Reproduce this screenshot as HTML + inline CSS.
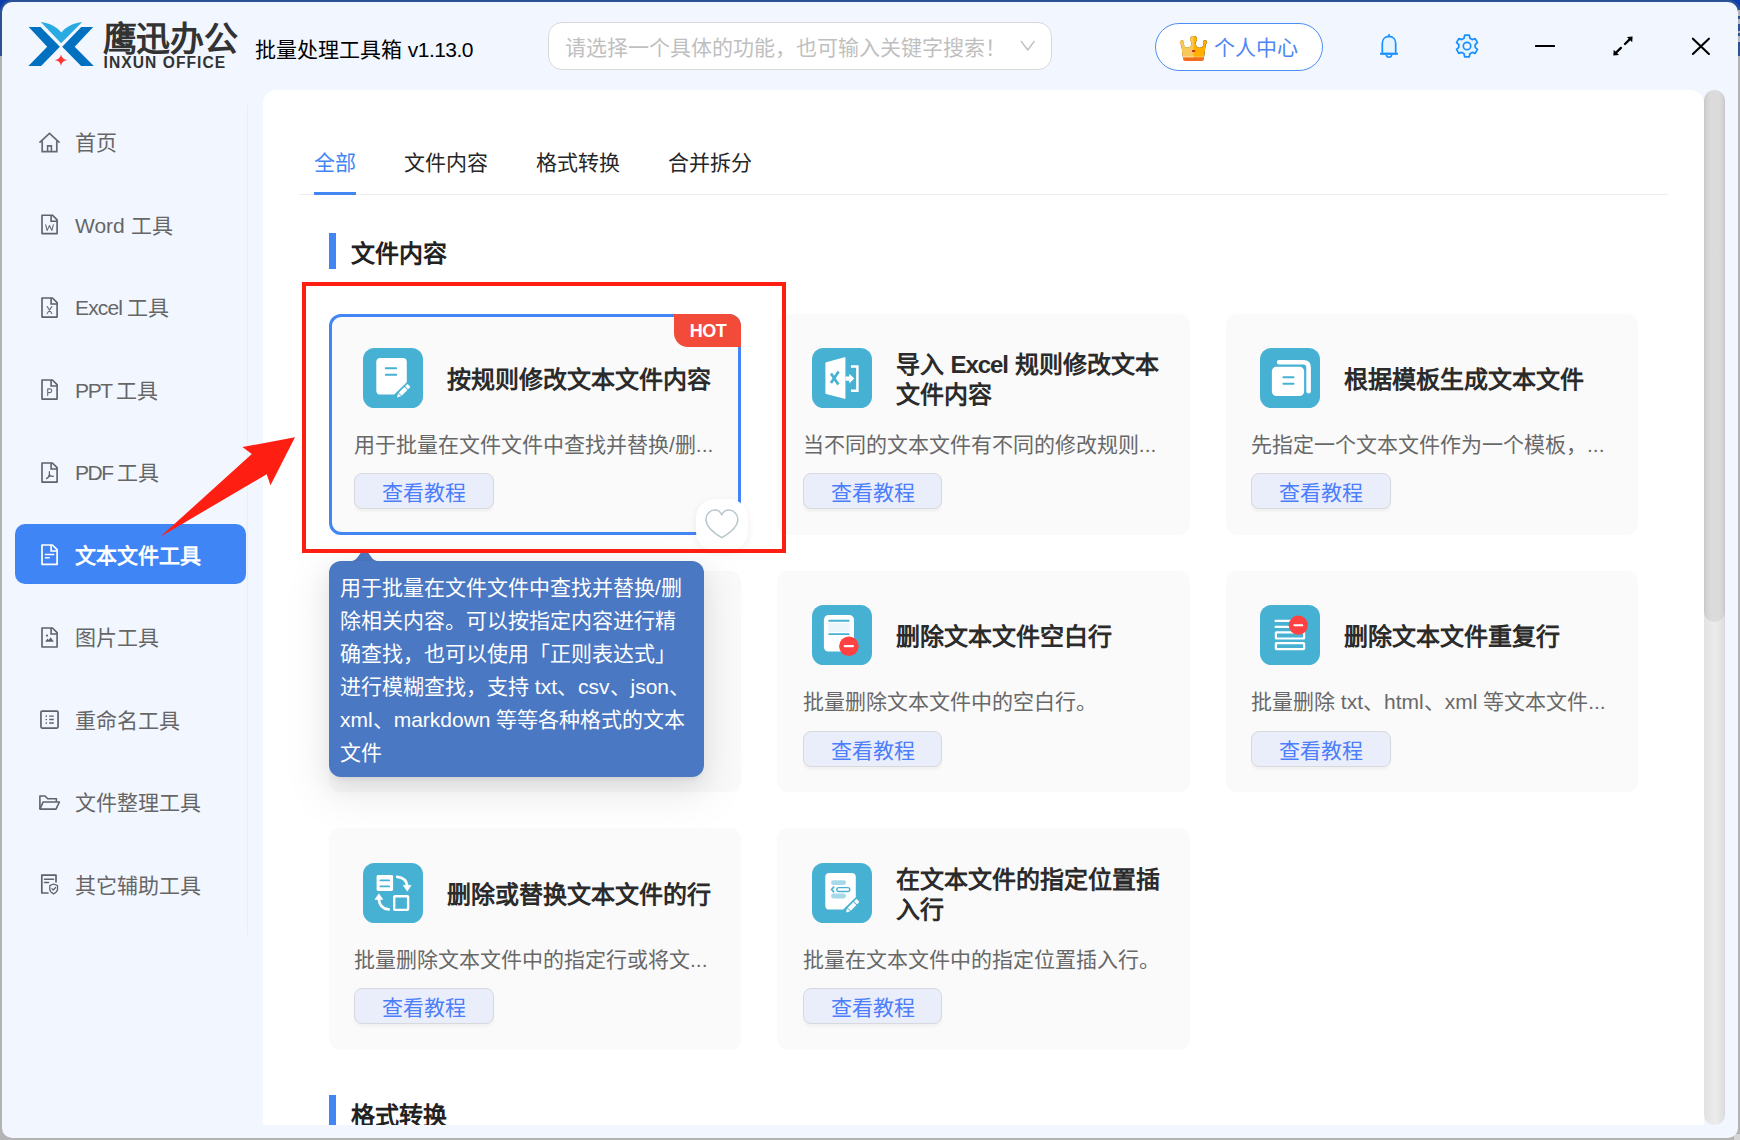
<!DOCTYPE html>
<html lang="zh-CN">
<head>
<meta charset="utf-8">
<title>批量处理工具箱</title>
<style>
*{box-sizing:border-box;margin:0;padding:0}
html,body{width:1740px;height:1140px;overflow:hidden}
body{position:relative;background:#b3b3b3;font-family:"Liberation Sans",sans-serif;color:#333}
.a{position:absolute}
.t{position:absolute;white-space:nowrap}
/* desktop behind window */
#desk-top{left:0;top:0;width:1740px;height:56px;background:#2b5293}
#desk-tl{left:0;top:0;width:11px;height:11px;background:#0a3db0;overflow:hidden}
#desk-tl i{position:absolute;left:2px;top:2px;width:40px;height:40px;border-radius:10px;box-shadow:0 0 0 2.2px #2b5293}
#desk-tr{left:1729px;top:0;width:11px;height:11px;background:#0a3db0;overflow:hidden}
#desk-tr i{position:absolute;right:2px;top:2px;width:40px;height:40px;border-radius:10px;box-shadow:0 0 0 2.2px #2b5293}
#desk-br{left:1734px;top:1134px;width:6px;height:6px;background:#d6d6d6}
#win{left:2px;top:2px;width:1736px;height:1136px;border-radius:10px;background:#f2f6ff;overflow:hidden}
/* top bar */
#brand-cn{left:102.5px;top:18px;font-size:34px;line-height:42px;font-weight:bold;color:#333;letter-spacing:-0.3px}
#brand-en{left:103.6px;top:54px;font-size:15.6px;line-height:18px;font-weight:bold;color:#333;letter-spacing:1.05px}
#apptitle{left:255px;top:35px;font-size:21px;line-height:30px;color:#000}
#search{left:548px;top:22px;width:504px;height:48px;border:1px solid #d9d9d9;border-radius:14px;background:#fff}
#search-ph{left:565px;top:33px;font-size:21px;line-height:30px;color:#bfbfbf}
#pc{left:1155px;top:23px;width:168px;height:48px;border:1px solid #4d8ef5;border-radius:24px;background:#fff}
#pc-t{left:1213.5px;top:33px;font-size:21px;line-height:30px;color:#4d86f2}
/* sidebar */
#sdiv{left:247px;top:105px;width:1px;height:830px;background:#ebedf0}
.si{position:absolute;left:75px;font-size:21px;line-height:30px;color:#666;white-space:nowrap}
#sact{left:15px;top:524px;width:231px;height:60px;border-radius:10px;background:#4085f5}
.si.on{color:#fff;font-weight:bold}
.sic{position:absolute;left:37px;width:26px;height:26px;overflow:visible}
/* panel */
#panel{left:263px;top:90px;width:1441px;height:1035px;background:#fff;border-radius:14px 14px 0 0;overflow:hidden}
#track{left:1704px;top:90px;width:21px;height:1035px;border-radius:10.5px;background:linear-gradient(90deg,#e2e2e2 0%,#ececec 55%,#e0e0e0 90%,#d8d8d8 100%)}
#thumb{left:1704px;top:90px;width:21px;height:532px;border-radius:10.5px;background:linear-gradient(90deg,#c7c7c7 0%,#d3d3d3 12%,#dbdbdb 32%,#dcdcdc 70%,#d3d3d3 90%,#c4c4c4 100%)}
</style>
<style>
.tab{position:absolute;top:147.5px;font-size:21px;line-height:30px;color:#262626;white-space:nowrap}
.sech{position:absolute;left:351px;font-size:24px;line-height:32px;font-weight:bold;color:#222;white-space:nowrap}
.secb{position:absolute;left:329px;width:7px;height:36px;background:#4285f4}
.card{position:absolute;width:412px;height:221px;border-radius:11px;background:#fafafa}
.card .ic{position:absolute;left:34px;top:34px;width:60px;height:60px}
.card .ttl{position:absolute;left:118px;top:51px;font-size:24px;line-height:30px;font-weight:bold;color:#2b2b2b;white-space:nowrap}
.card .ttl.two{top:36px}
.card .desc{position:absolute;left:25px;top:116px;font-size:21px;line-height:30px;color:#686868;white-space:nowrap}
.card .btn{position:absolute;left:25px;top:159px;width:139.5px;height:36px;border:1px solid #d8d9de;border-radius:8px;background:#eaeefb;color:#4c7dfb;font-size:21px;line-height:38px;text-align:center;white-space:nowrap;box-shadow:0 2.5px 2px rgba(0,0,0,.035)}
#c1{border:3px solid #4285f4;border-radius:12px}
.card.c2>*{margin-left:.8px}
.card.r3>*{margin-top:.7px}
.card.r2>*{margin-top:.35px}
.card.r2>.btn{margin-top:1.3px}
#c1 .ic{left:31px;top:31px}
#c1 .ttl{left:115px;top:48px}
#c1 .desc{left:22px;top:113px}
#c1 .btn{left:22px;top:156px}
#hot{position:absolute;left:674px;top:314px;width:67px;height:33px;background:#f24b39;border-radius:0 12px 0 14px;color:#fff;font-weight:bold;font-size:18px;line-height:35px;text-align:center;letter-spacing:-.55px;padding-left:1px}
#heart{position:absolute;left:696px;top:499px;width:52px;height:52px;border-radius:19px;background:#fff;box-shadow:0 2px 9px rgba(0,0,0,.07)}
#tip{position:absolute;left:329px;top:561px;width:375px;height:216px;border-radius:12px;background:#4b78c3;box-shadow:0 4.5px 9px -6px rgba(0,0,0,.12),0 9px 24px 0 rgba(0,0,0,.08),0 13.5px 42px 12px rgba(0,0,0,.05);color:#fff;font-size:21px;line-height:33px;padding:10px 0 0 11px;white-space:nowrap}
#redbox{position:absolute;left:302px;top:282px;width:484px;height:271px;border:4px solid #ff1f12}
</style>
</head>
<body>
<div class="a" id="desk-top"></div>
<div class="a" id="desk-tl"><i></i></div>
<div class="a" id="desk-tr"><i></i></div>
<div class="a" id="desk-br"></div>
<div class="a" style="left:1738px;top:10px;width:2px;height:6px;background:#b6b6bf"></div>
<div class="a" style="left:1738px;top:19px;width:2px;height:5px;background:#b6b6bf"></div>
<div class="a" style="left:1738px;top:31px;width:2px;height:2px;background:#b6b6bf"></div>
<div class="a" style="left:1738px;top:36px;width:2px;height:6px;background:#b6b6bf"></div>
<div class="a" id="win"></div>

<!-- ============ TOP BAR ============ -->
<svg class="a" style="left:20px;top:12px" width="90" height="66" viewBox="20 12 90 66">
  <polygon points="28.7,27 40.5,27 59.9,46.7 41.1,66.1 28.4,66.1 47.2,46.7" fill="#0070c0"/>
  <polygon points="93.2,27 81.3,27 62.2,46.7 81.1,66.1 93.8,66.1 74.7,46.7" fill="#0070c0"/>
  <path d="M40.8,22.1 C49,23 56,26.5 61.4,32.5 C66.5,26.5 74,23 82.2,22.1 L61.1,43.3 Z" fill="#29abe2"/>
  <path d="M61,54.5 C61.6,57.6 63.6,59.5 67.3,60.1 C63.6,60.7 61.6,62.6 61,65.7 C60.4,62.6 58.4,60.7 54.7,60.1 C58.4,59.5 60.4,57.6 61,54.5 Z" fill="#ff3535"/>
</svg>
<div class="t" id="brand-cn">鹰迅办公</div>
<div class="t" id="brand-en">INXUN OFFICE</div>
<div class="t" id="apptitle">批量处理工具箱 <span style="letter-spacing:-.55px">v1.13.0</span></div>

<div class="a" id="search"></div>
<div class="t" id="search-ph">请选择一个具体的功能，也可输入关键字搜索！</div>
<svg class="a" style="left:1018px;top:38px" width="20" height="16" viewBox="0 0 20 16"><path d="M3.2,3.4 L9.7,12 L16.2,3.4" fill="none" stroke="#bdbdbd" stroke-width="1.4" stroke-linecap="round" stroke-linejoin="round"/></svg>

<div class="a" id="pc"></div>
<!-- crown -->
<svg class="a" style="left:1178px;top:34px" width="32" height="30" viewBox="1178 34 32 30">
  <g id="crown">
    <path d="M1181.2,43.8 L1183,57.4 H1204 L1205.8,43.8 L1203.3,44.2 C1203.1,46.5 1201.6,47.8 1199.5,47.8 C1197.3,47.8 1195.9,46.1 1195.7,43.3 L1195.3,40.8 H1191.9 L1191.5,43.3 C1191.3,46.1 1189.9,47.8 1187.7,47.8 C1185.6,47.8 1184.1,46.5 1183.9,44.2 Z"/>
    <circle cx="1182" cy="42.6" r="2.05"/><circle cx="1193.6" cy="39.3" r="3.35"/><circle cx="1205" cy="42.4" r="2.05"/>
  </g>
  <use href="#crown" fill="#ffb000"/>
  <svg x="1178" y="34" width="15.6" height="30" viewBox="1178 34 15.6 30"><use href="#crown" fill="#f7c85c"/></svg>
  <rect x="1183" y="56.2" width="21" height="1.4" fill="#ffbf3f"/>
  <rect x="1183" y="56.2" width="10.6" height="1.4" fill="#fbdc98"/>
  <path d="M1183,57.4 H1204 V58.4 Q1204,60.9 1201.4,60.9 H1185.6 Q1183,60.9 1183,58.4 Z" fill="#f36d1e"/>
  <rect x="1192" y="50" width="3.2" height="2.1" rx=".5" fill="#d82a1c"/>
</svg>
<div class="t" id="pc-t">个人中心</div>

<!-- bell -->
<svg class="a" style="left:1376px;top:31px" width="26" height="30" viewBox="1376 31 26 30">
  <path d="M1382.3,53.7 V43.6 C1382.3,39.1 1385.3,36.4 1389,36.4 C1392.7,36.4 1395.7,39.1 1395.7,43.6 V53.7 Z" fill="#e6f4ff" stroke="#1890ff" stroke-width="1.7" stroke-linejoin="round"/>
  <path d="M1380,53.8 H1398" stroke="#1890ff" stroke-width="1.9"/>
  <path d="M1389,34.8 V36.4" stroke="#1890ff" stroke-width="1.8" stroke-linecap="round"/>
  <path d="M1386.3,54.6 C1386.5,56.3 1387.6,57.2 1389,57.2 C1390.4,57.2 1391.5,56.3 1391.7,54.6" fill="none" stroke="#1890ff" stroke-width="1.6"/>
</svg>
<!-- gear -->
<svg class="a" style="left:1453px;top:32px" width="28" height="28" viewBox="-14 -14 28 28">
  <path id="gearp" fill="#e6f4ff" stroke="#1890ff" stroke-width="1.75" stroke-linejoin="round" d="M-2.97,-7.75 L-2.29,-10.76 L2.29,-10.76 L2.97,-7.75 L5.22,-6.45 L8.17,-7.36 L10.46,-3.40 L8.20,-1.30 L8.20,1.30 L10.46,3.40 L8.17,7.36 L5.22,6.45 L2.97,7.75 L2.29,10.76 L-2.29,10.76 L-2.97,7.75 L-5.22,6.45 L-8.17,7.36 L-10.46,3.40 L-8.20,1.30 L-8.20,-1.30 L-10.46,-3.40 L-8.17,-7.36 L-5.22,-6.45 Z"/>
  <circle cx="0" cy="0" r="3.7" fill="#f2f6ff" stroke="#1890ff" stroke-width="1.7"/>
</svg>
<!-- window controls -->
<div class="a" style="left:1535px;top:44.6px;width:20px;height:2.5px;background:#000;border-radius:.6px"></div>
<svg class="a" style="left:1610px;top:33px" width="26" height="26" viewBox="1610 33 26 26">
  <path d="M1625,44 L1630.4,38.6 M1620.9,47.9 L1615.5,53.3" stroke="#000" stroke-width="2.3" stroke-linecap="round"/>
  <polygon points="1626.9,36.9 1632.6,36.5 1632.2,42.2" fill="#000"/>
  <polygon points="1613.7,49.7 1613.3,55.4 1619,55" fill="#000"/>
</svg>
<svg class="a" style="left:1688px;top:33px" width="26" height="26" viewBox="1688 33 26 26">
  <path d="M1692.9,38.7 L1708.9,54 M1708.9,38.7 L1692.9,54" stroke="#000" stroke-width="2.1" stroke-linecap="round"/>
</svg>
<!-- ============ SIDEBAR ============ -->
<div class="a" id="sdiv"></div>
<div class="a" id="sact"></div>

<!-- home -->
<svg class="a" style="left:36px;top:129px" width="28" height="28" viewBox="36 129 28 28">
  <path d="M40,142.2 L49.5,133.3 L59,142.2" fill="none" stroke="#666a70" stroke-width="1.7" stroke-linejoin="miter" stroke-linecap="round"/>
  <path d="M42.2,140.6 V151.7 H56.8 V140.6" fill="none" stroke="#666a70" stroke-width="1.7"/>
  <path d="M47.6,151.7 V145.9 H51.4 V151.7" fill="none" stroke="#666a70" stroke-width="1.6"/>
</svg>
<div class="si" style="top:128px">首页</div>

<!-- word -->
<svg class="a" style="left:38px;top:211px" width="24" height="28" viewBox="38 211 24 28">
  <path d="M42,215.2 H52.4 L57.1,219.9 V233.6 H42 Z" fill="none" stroke="#5f6368" stroke-width="1.65" stroke-linejoin="round"/>
  <path d="M51.1,215.2 V221.2 H57.1" fill="none" stroke="#5f6368" stroke-width="1.6"/>
  <path d="M45.6,224.7 L47.1,230.4 L49.5,225.5 L51.9,230.4 L53.4,224.7" fill="none" stroke="#6a6e73" stroke-width="1.1" stroke-linejoin="round" stroke-linecap="round"/>
</svg>
<div class="si" style="top:210.5px">Word 工具</div>

<!-- excel -->
<svg class="a" style="left:38px;top:294px" width="24" height="28" viewBox="38 294 24 28">
  <path d="M42,298 H52.4 L57.1,302.7 V317.1 H42 Z" fill="none" stroke="#5f6368" stroke-width="1.65" stroke-linejoin="round"/>
  <path d="M51.1,298 V304 H57.1" fill="none" stroke="#5f6368" stroke-width="1.6"/>
  <path d="M47.2,306.6 L51.8,313.5 M51.8,306.6 L47.2,313.5" fill="none" stroke="#6a6e73" stroke-width="1.15" stroke-linecap="round"/>
</svg>
<div class="si" style="top:293px"><span style="letter-spacing:-.85px">Excel </span>工具</div>

<!-- ppt -->
<svg class="a" style="left:38px;top:376px" width="24" height="28" viewBox="38 376 24 28">
  <path d="M42,380 H52.4 L57.1,384.7 V399.1 H42 Z" fill="none" stroke="#5f6368" stroke-width="1.65" stroke-linejoin="round"/>
  <path d="M51.1,380 V386 H57.1" fill="none" stroke="#5f6368" stroke-width="1.6"/>
  <path d="M47.7,395.5 V388.9 H49.8 C52.4,388.9 52.4,392.6 49.8,392.6 H47.7" fill="none" stroke="#6a6e73" stroke-width="1.1" stroke-linejoin="round" stroke-linecap="round"/>
</svg>
<div class="si" style="top:375.5px"><span style="letter-spacing:-1.35px">PPT </span>工具</div>

<!-- pdf -->
<svg class="a" style="left:38px;top:459px" width="24" height="28" viewBox="38 459 24 28">
  <path d="M42,463 H52.4 L57.1,467.7 V482.1 H42 Z" fill="none" stroke="#5f6368" stroke-width="1.65" stroke-linejoin="round"/>
  <path d="M51.1,463 V469 H57.1" fill="none" stroke="#5f6368" stroke-width="1.6"/>
  <path d="M49.4,471.6 C49.2,473.5 49.6,474.8 49.5,475.6 M49.5,475.6 C48.6,477.2 47.6,478 46.4,478.6 M49.5,475.6 C50.8,476 52,476 53.4,476.3" fill="none" stroke="#5f6368" stroke-width="1.2" stroke-linecap="round"/>
  <circle cx="49.5" cy="475.6" r="1" fill="none" stroke="#5f6368" stroke-width=".8"/>
</svg>
<div class="si" style="top:458px"><span style="letter-spacing:-1.4px">PDF </span>工具</div>

<!-- text (active) -->
<svg class="a" style="left:38px;top:541px" width="24" height="28" viewBox="38 541 24 28">
  <path d="M42,545 H52.4 L57.1,549.7 V564.3 H42 Z" fill="none" stroke="#fff" stroke-width="1.7" stroke-linejoin="round"/>
  <path d="M51.1,545 V551 H57.1" fill="none" stroke="#fff" stroke-width="1.6"/>
  <path d="M45.4,554.6 H53.7 M45.4,557.7 H49.2" fill="none" stroke="#fff" stroke-width="1.5" stroke-linecap="round"/>
</svg>
<div class="si on" style="top:540.5px">文本文件工具</div>

<!-- image -->
<svg class="a" style="left:38px;top:624px" width="24" height="28" viewBox="38 624 24 28">
  <path d="M42,628 H52.4 L57.1,632.7 V647 H42 Z" fill="none" stroke="#5f6368" stroke-width="1.65" stroke-linejoin="round"/>
  <path d="M51.1,628 V634 H57.1" fill="none" stroke="#5f6368" stroke-width="1.6"/>
  <circle cx="47" cy="635.6" r="1.1" fill="#5f6368"/>
  <path d="M45.1,641.7 L47.6,638.5 L48.7,639.9 L50.6,637.3 L53.9,641.7 Z" fill="#5f6368"/>
</svg>
<div class="si" style="top:623px">图片工具</div>

<!-- rename -->
<svg class="a" style="left:37px;top:706px" width="26" height="28" viewBox="37 706 26 28">
  <rect x="40.95" y="711.05" width="17.1" height="17" rx="1.2" fill="none" stroke="#5f6368" stroke-width="1.7"/>
  <path d="M49.2,716.1 H53.8 M49.2,719.5 H53.8 M49.2,723 H53.8" stroke="#5f6368" stroke-width="1.3"/>
  <circle cx="46.3" cy="716.1" r=".85" fill="#5f6368"/><circle cx="46.3" cy="719.5" r=".85" fill="#5f6368"/><circle cx="46.3" cy="723" r=".85" fill="#5f6368"/>
</svg>
<div class="si" style="top:705.5px">重命名工具</div>

<!-- folder -->
<svg class="a" style="left:36px;top:790px" width="28" height="26" viewBox="36 790 28 26">
  <path d="M39.9,809.1 V796 H45 L47.7,798.8 H56.4 V801.6" fill="none" stroke="#5f6368" stroke-width="1.6" stroke-linejoin="round"/>
  <path d="M39.9,809.1 L43.1,802 H59.4 L56,809.1 Z" fill="none" stroke="#5f6368" stroke-width="1.6" stroke-linejoin="round"/>
</svg>
<div class="si" style="top:788px">文件整理工具</div>

<!-- other -->
<svg class="a" style="left:37px;top:870px" width="26" height="28" viewBox="37 870 26 28">
  <path d="M56,882.4 V875.2 H41.8 V893 H48.6" fill="none" stroke="#5f6368" stroke-width="1.7" stroke-linejoin="round"/>
  <path d="M44.5,879.2 H53.5 M44.5,882.4 H48.6" stroke="#5f6368" stroke-width="1.5" stroke-linecap="round"/>
  <path d="M53.6,884 L57.5,885.6 V889.6 C57.5,891.4 55.8,892.8 53.6,893.9 C51.4,892.8 49.8,891.4 49.8,889.6 V885.6 Z" fill="none" stroke="#5f6368" stroke-width="1.3" stroke-linejoin="round"/>
  <path d="M51.9,888.7 L53.2,890 L55.6,887.5" fill="none" stroke="#5f6368" stroke-width="1.2" stroke-linecap="round" stroke-linejoin="round"/>
</svg>
<div class="si" style="top:870.5px">其它辅助工具</div>
<!-- ============ MAIN PANEL ============ -->
<div class="a" id="panel"></div>
<div class="a" id="track"></div>
<div class="a" id="thumb"></div>

<div class="tab" style="left:314px;color:#4285f4">全部</div>
<div class="tab" style="left:404px">文件内容</div>
<div class="tab" style="left:536px">格式转换</div>
<div class="tab" style="left:668px">合并拆分</div>
<div class="a" style="left:299px;top:194px;width:1369px;height:1px;background:#ededed"></div>
<div class="a" style="left:314px;top:192px;width:42px;height:3px;background:#4285f4"></div>

<div class="secb" style="top:233px"></div>
<div class="sech" style="top:237.5px">文件内容</div>
<!-- ============ CARDS ============ -->
<!-- reusable symbols -->
<svg width="0" height="0" style="position:absolute">
  <defs>
    <g id="docpen">
      <rect width="60" height="60" rx="11.5" fill="#46b1d3"/>
      <path d="M17.5,10.1 H39.6 Q43.8,10.1 43.8,14.3 V34.3 L31.2,46.6 H17.5 Q13.3,46.6 13.3,42.4 V14.3 Q13.3,10.1 17.5,10.1 Z" fill="#fff"/>
      <g transform="translate(34,49.5) rotate(-45.5)" fill="#fff">
        <polygon points="0,0 3.7,-2.15 3.7,2.15"/>
        <rect x="4.6" y="-2.15" width="8.1" height="4.3"/>
        <rect x="13.6" y="-2.15" width="3.5" height="4.3" rx=".9"/>
      </g>
    </g>
  </defs>
</svg>

<!-- card 1 -->
<div class="card" id="c1" style="left:329px;top:314px">
  <svg class="ic" viewBox="0 0 60 60"><use href="#docpen"/>
    <path d="M22.8,20.3 H33.2 M22.8,26.8 H33.2" stroke="#46b1d3" stroke-width="2" stroke-linecap="round"/>
  </svg>
  <div class="ttl">按规则修改文本文件内容</div>
  <div class="desc">用于批量在文件文件中查找并替换/删...</div>
  <div class="btn">查看教程</div>
</div>
<div id="hot">HOT</div>
<div id="heart"></div>
<svg class="a" style="left:702px;top:506px" width="40" height="36" viewBox="702 506 40 36">
  <path d="M721.8,514.9 C720.3,511.7 717.7,510.1 714.9,510.1 C710,510.1 706,514.1 706,519.2 C706,526.3 713.6,532.9 721.8,537.7 C730,532.9 737.8,526.3 737.8,519.2 C737.8,514.1 733.7,510.1 728.8,510.1 C726,510.1 723.4,511.7 721.8,514.9 Z" fill="none" stroke="#b9c6cc" stroke-width="1.5" stroke-linejoin="round"/>
</svg>

<!-- card 2 -->
<div class="card c2" style="left:777px;top:314px;width:413px">
  <svg class="ic" viewBox="0 0 60 60">
    <rect width="60" height="60" rx="11.5" fill="#46b1d3"/>
    <path d="M14.2,14.2 L33.4,9 V51 L14.2,45.9 Q13.4,45.7 13.4,44.9 V15.2 Q13.4,14.4 14.2,14.2 Z" fill="#fff"/>
    <path d="M19,25.6 L26.4,36.6 M26.6,23.5 L19,35" stroke="#46b1d3" stroke-width="2.7" fill="none"/>
    <polygon points="33.4,28.5 37.3,28.5 37.3,25.7 42.3,30.6 37.3,35.5 37.3,32.8 33.4,32.8" fill="#fff"/>
    <path d="M38.9,18.4 H45.4 V42.7 H38.9" fill="none" stroke="#fff" stroke-width="2.5"/>
  </svg>
  <div class="ttl two">导入 <span style="letter-spacing:-1.05px">Excel</span> 规则修改文本<br>文件内容</div>
  <div class="desc">当不同的文本文件有不同的修改规则...</div>
  <div class="btn">查看教程</div>
</div>

<!-- card 3 -->
<div class="card" style="left:1226px;top:314px">
  <svg class="ic" viewBox="0 0 60 60">
    <rect width="60" height="60" rx="11.5" fill="#46b1d3"/>
    <path d="M19.1,14.2 H43.4 Q48.6,14.2 48.6,19.4 V43.2" fill="none" stroke="#fff" stroke-width="4.6" stroke-linecap="round"/>
    <rect x="10.6" y="17.4" width="34.8" height="31.9" rx="5.6" fill="#46b1d3"/>
    <rect x="11.9" y="18.7" width="32.2" height="29.3" rx="4.5" fill="#fff"/>
    <path d="M23.4,29.3 H33.5 M23.4,35.7 H33.5" stroke="#46b1d3" stroke-width="2" stroke-linecap="round"/>
  </svg>
  <div class="ttl">根据模板生成文本文件</div>
  <div class="desc">先指定一个文本文件作为一个模板，...</div>
  <div class="btn">查看教程</div>
</div>

<!-- card 4 (mostly hidden by tooltip) -->
<div class="card" style="left:329px;top:571px"></div>

<!-- card 5 -->
<div class="card c2 r2" style="left:777px;top:571px;width:413px">
  <svg class="ic" viewBox="0 0 60 60">
    <rect width="60" height="60" rx="11.5" fill="#46b1d3"/>
    <rect x="11.9" y="10.1" width="30.1" height="36.5" rx="4.6" fill="#fff"/>
    <rect x="16.2" y="18.2" width="21.5" height="8.6" fill="#eaf6fa"/>
    <path d="M17.2,15.8 H36.7 M17.2,29.1 H36.7" stroke="#46b1d3" stroke-width="1.9" stroke-linecap="round"/>
    <circle cx="36.9" cy="41.2" r="9.8" fill="#ff4141"/>
    <path d="M32.8,41.1 H40.9" stroke="#fff" stroke-width="2.2" stroke-linecap="round"/>
  </svg>
  <div class="ttl">删除文本文件空白行</div>
  <div class="desc">批量删除文本文件中的空白行。</div>
  <div class="btn">查看教程</div>
</div>

<!-- card 6 -->
<div class="card r2" style="left:1226px;top:571px">
  <svg class="ic" viewBox="0 0 60 60">
    <rect width="60" height="60" rx="11.5" fill="#46b1d3"/>
    <rect x="14.8" y="14.8" width="30.4" height="2.3" rx=".4" fill="#fff"/>
    <rect x="14.8" y="20.8" width="30.4" height="2.3" rx=".4" fill="#fff"/>
    <rect x="15.9" y="27.3" width="28.2" height="6.2" rx=".5" fill="none" stroke="#fff" stroke-width="2.2"/>
    <rect x="15.9" y="38.1" width="28.2" height="6" rx=".5" fill="none" stroke="#fff" stroke-width="2.2"/>
    <circle cx="38.3" cy="20.2" r="9.6" fill="#ff4141"/>
    <path d="M34.3,20.2 H42.3" stroke="#fff" stroke-width="1.9" stroke-linecap="round"/>
  </svg>
  <div class="ttl">删除文本文件重复行</div>
  <div class="desc">批量删除 txt、html、xml 等文本文件...</div>
  <div class="btn">查看教程</div>
</div>

<!-- card 7 -->
<div class="card r3" style="left:329px;top:828px;height:222px">
  <svg class="ic" viewBox="0 0 60 60">
    <rect width="60" height="60" rx="11.5" fill="#46b1d3"/>
    <rect x="13.6" y="12" width="16.5" height="16" rx="1.4" fill="#fff"/>
    <path d="M17.4,17.4 H26.2 M17.4,23.3 H26.2" stroke="#46b1d3" stroke-width="1.8" stroke-linecap="round"/>
    <rect x="31.2" y="33.2" width="13.9" height="13.7" rx=".9" fill="none" stroke="#fff" stroke-width="2.4"/>
    <path d="M34.2,13.8 C39.6,14.3 43.6,17.6 44.2,23" fill="none" stroke="#fff" stroke-width="2.7" stroke-linecap="round"/>
    <polygon points="40.1,22.3 48.2,22.3 44.3,28.2" fill="#fff" stroke="#fff" stroke-width=".5" stroke-linejoin="round"/>
    <path d="M25.7,46.4 C20.4,45.8 16.4,42.5 15.9,36.3" fill="none" stroke="#fff" stroke-width="2.7" stroke-linecap="round"/>
    <polygon points="11.9,36.5 19.9,36.5 15.9,30.7" fill="#fff" stroke="#fff" stroke-width=".5" stroke-linejoin="round"/>
  </svg>
  <div class="ttl">删除或替换文本文件的行</div>
  <div class="desc">批量删除文本文件中的指定行或将文...</div>
  <div class="btn">查看教程</div>
</div>

<!-- card 8 -->
<div class="card c2 r3" style="left:777px;top:828px;width:413px;height:222px">
  <svg class="ic" viewBox="0 0 60 60"><use href="#docpen"/>
    <rect x="19" y="17.2" width="15" height="4.8" rx="2.4" fill="#a6dae9"/>
    <rect x="19" y="30.5" width="15" height="4.9" rx="2.45" fill="#a6dae9"/>
    <path d="M21.7,24.1 L19.5,26.5 L21.7,28.9" fill="none" stroke="#46b1d3" stroke-width="1.6" stroke-linecap="round" stroke-linejoin="round"/>
    <rect x="24.8" y="24.6" width="13" height="3.9" rx="1.95" fill="#fff" stroke="#46b1d3" stroke-width="1.4"/>
  </svg>
  <div class="ttl two">在文本文件的指定位置插<br>入行</div>
  <div class="desc">批量在文本文件中的指定位置插入行。</div>
  <div class="btn">查看教程</div>
</div>

<!-- section 2 header (clipped at panel bottom) -->
<div class="a" style="left:263px;top:1085px;width:1441px;height:40px;overflow:hidden">
  <div class="secb" style="left:66px;top:10px"></div>
  <div class="sech" style="left:88px;top:14.5px">格式转换</div>
</div>
<!-- ============ TOOLTIP ============ -->
<svg class="a" style="left:345px;top:548px" width="40" height="15" viewBox="345 548 40 15">
  <path d="M349.5,561.3 C353.5,561.3 355.5,559.9 357,558 L361.2,552.3 Q364.5,548.6 367.8,552.3 L372,558 C373.5,559.9 375.5,561.3 379.5,561.3 Z" fill="#4b78c3"/>
</svg>
<div id="tip">用于批量在文件文件中查找并替换/删<br>除相关内容。可以按指定内容进行精<br>确查找，也可以使用「正则表达式」<br>进行模糊查找，支持 txt、csv、json、<br>xml、markdown 等等各种格式的文本<br>文件</div>

<!-- ============ ANNOTATIONS ============ -->
<div id="redbox"></div>
<svg class="a" style="left:150px;top:430px" width="160" height="115" viewBox="150 430 160 115">
  <polygon points="160,537 251.8,454.1 242.4,447.1 295,437.2 270.5,485.3 266.7,474.2" fill="#ff1f12"/>
</svg>
</body>
</html>
